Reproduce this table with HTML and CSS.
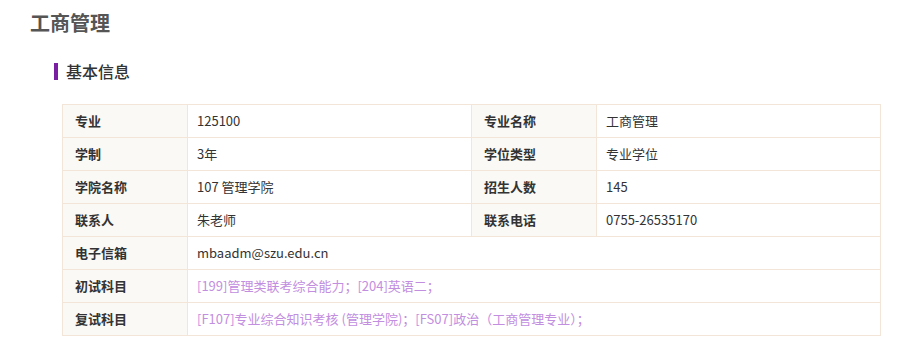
FILE: index.html
```html
<!DOCTYPE html>
<html lang="zh">
<head>
<meta charset="utf-8">
<link rel="stylesheet" href="styles.css">
</head>
<body>
<div class="page">
  <h1 class="title">工商管理</h1>
  <h2 class="section">基本信息</h2>
  <table class="info">
    <colgroup><col class="c-l"><col class="c-v"><col class="c-l"><col class="c-v"></colgroup>
    <tr><th>专业</th><td>125100</td><th>专业名称</th><td>工商管理</td></tr>
    <tr><th>学制</th><td>3年</td><th>学位类型</th><td>专业学位</td></tr>
    <tr><th>学院名称</th><td>107 管理学院</td><th>招生人数</th><td>145</td></tr>
    <tr><th>联系人</th><td>朱老师</td><th>联系电话</th><td>0755-26535170</td></tr>
    <tr><th>电子信箱</th><td colspan="3">mbaadm@szu.edu.cn</td></tr>
    <tr><th>初试科目</th><td colspan="3" class="purple">[199]管理类联考综合能力；[204]英语二；</td></tr>
    <tr><th>复试科目</th><td colspan="3" class="purple">[F107]专业综合知识考核 (管理学院)；[FS07]政治（工商管理专业）；</td></tr>
  </table>
</div>
</body>
</html>
```
FILE: styles.css
```css
html, body { margin: 0; padding: 0; background: #fff; }
body { font-family: "Noto Sans CJK SC", "Microsoft YaHei", sans-serif; color: #333; }
.page { padding: 10px 0 0 30px; }
.title { margin: 0; font-size: 20px; line-height: 26px; font-weight: bold; color: #555; }
.section { margin: 27px 0 0 24px; padding-left: 8px; border-left: 4px solid #7b1fa2; font-size: 16px; line-height: 17px; font-weight: 500; color: #333; }
.info { margin: 24px 0 0 32px; border-collapse: collapse; table-layout: fixed; width: 819px; font-size: 13px; }
.c-l { width: 125px; }
.c-v { width: 284px; }
.info th, .info td { border: 1px solid #f3e6d8; height: 32px; padding: 0; text-align: left; vertical-align: middle; line-height: 18px; }
.info th { background: #fbf9f5; font-weight: bold; padding-left: 12px; color: #333; }
.info td { padding-left: 9px; color: #333; }
.info td.purple { color: #c28ee0; }
```
